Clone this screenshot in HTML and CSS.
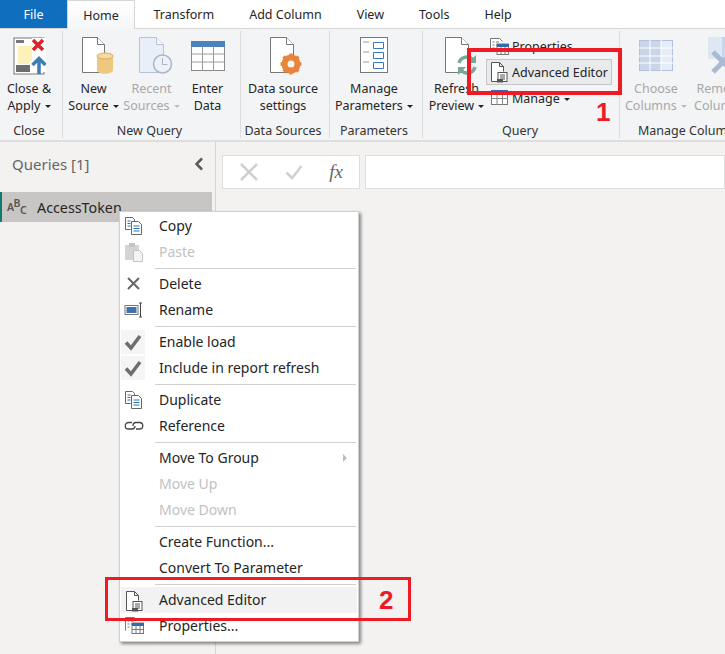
FILE: index.html
```html
<!DOCTYPE html>
<html lang="en">
<head>
    <meta charset="UTF-8">
    <meta name="viewport" content="width=device-width, initial-scale=1.0">
    <title>Power Query Editor</title>
    <link rel="stylesheet" href="styles.css">
</head>
<body>
    <svg class="defs" width="0" height="0">
        <symbol id="i-copy" viewBox="0 0 20 20">
            <path d="M1.500 1.500h7l2 2v2M1.500 1.500v12h5" fill="#fff" stroke="#666"/>
            <path d="M3.500 5h3M3.500 7.500h3M3.500 10h3" stroke="#2f6fb0"/>
            <path d="M7.500 5.500h7l3 3v10h-10z" fill="#fff" stroke="#666"/>
            <path d="M9.500 10h6M9.500 12.500h6M9.500 15h6" stroke="#2f6fb0"/>
        </symbol>
        <symbol id="i-editor" viewBox="0 0 20 22">
            <path d="M8 20.500H2.500v-19h8l4 4v5M10.500 1.500v4h4" fill="#fff" stroke="#555"/>
            <rect x="9" y="11.500" width="9" height="9" fill="#fff" stroke="#555"/>
            <path d="M11 14h5M11 16h5M11 18h5" stroke="#555"/>
            <rect x="8" y="18" width="6" height="3.500" fill="#555"/>
        </symbol>
        <symbol id="i-props" viewBox="0 0 20 18">
            <path d="M1.500 14.500v-13h9l3 3" fill="#fff" stroke="#777"/>
            <path d="M3.500 5h2M3.500 8h2M3.500 11h2M7 5h3M7 8h3" stroke="#777"/>
            <rect x="8" y="7" width="11.500" height="10.500" fill="#fff" stroke="#777"/>
            <rect x="8" y="7" width="12" height="3" fill="#2f6db0"/>
            <path d="M8 13.500h12M12 10v8M16 10v8" stroke="#777"/>
        </symbol>
        <symbol id="i-check" viewBox="0 0 24 24">
            <path d="M5 12.500l5 5.500 9-12" fill="none" stroke="#6e6e6e" stroke-width="3.500"/>
        </symbol>
    </svg>

    <nav class="tabs">
        <a class="tab tab-file">File</a>
        <a class="tab tab-active">Home</a>
        <a class="tab">Transform</a>
        <a class="tab">Add Column</a>
        <a class="tab">View</a>
        <a class="tab">Tools</a>
        <a class="tab">Help</a>
    </nav>

    <section class="ribbon">
        <div class="group group-close">
            <div class="tools">
                <div class="tool">
                    <svg class="big" width="34" height="40" viewBox="0 0 34 40">
                        <rect x="2" y="2" width="30" height="36" fill="#fff" stroke="#777"/>
                        <path d="M6 10h14l0 4 10 0-14 14H6z" fill="#fdf0b8"/>
                        <rect x="4" y="4" width="8" height="3" fill="#777"/>
                        <rect x="4" y="29" width="14" height="7" fill="#6e6e6e"/>
                        <path d="M20 2h14v34H20" fill="#fff"/>
                        <path d="M21 4l10 10M31 4L21 14" stroke="#d9252a" stroke-width="3.500"/>
                        <path d="M27 38V23M20.500 29l6.500-6.500 6.500 6.500" fill="none" stroke="#3e7cb8" stroke-width="3.500"/>
                    </svg>
                    <span class="label">Close &amp;<br>Apply <i class="caret"></i></span>
                </div>
            </div>
            <div class="group-name">Close</div>
        </div>

        <div class="group group-new">
            <div class="tools">
                <div class="tool tool-new">
                    <svg class="big" width="34" height="40" viewBox="0 0 34 40">
                        <path d="M2.500 1.500h15l7 7v28h-22z" fill="#fff" stroke="#777"/>
                        <path d="M17.500 1.500v7h7" fill="#fff" stroke="#777"/>
                        <path d="M17 20v14c0 5 16 5 16 0V20z" fill="#eec87e"/>
                        <ellipse cx="25" cy="20" rx="8" ry="3" fill="#f3d9a4" stroke="#dfae58"/>
                    </svg>
                    <span class="label">New<br>Source <i class="caret"></i></span>
                </div>
                <div class="tool tool-recent off">
                    <svg class="big" width="36" height="40" viewBox="0 0 36 40">
                        <path d="M2.500 1.500h17l7 7v28h-24z" fill="#e9eff9" stroke="#b4c3dc"/>
                        <path d="M19.500 1.500v7h7" fill="#f6f8fc" stroke="#b4c3dc"/>
                        <circle cx="25.500" cy="28" r="9" fill="#eef2f8" stroke="#a9b6c9" stroke-width="1.500"/>
                        <path d="M25.500 22v6.500h5" fill="none" stroke="#a9b6c9"/>
                    </svg>
                    <span class="label">Recent<br>Sources <i class="caret"></i></span>
                </div>
                <div class="tool tool-enter">
                    <svg class="big" width="36" height="40" viewBox="0 -4 36 40">
                        <rect x="1.500" y="1.500" width="33" height="29" fill="#fff" stroke="#8a8a8a"/>
                        <rect x="1" y="1" width="34" height="6" fill="#4f81bd"/>
                        <path d="M1 14h34M1 22h34M12.500 7v24M23.500 7v24" stroke="#9a9a9a"/>
                    </svg>
                    <span class="label">Enter<br>Data</span>
                </div>
            </div>
            <div class="group-name">New Query</div>
        </div>

        <div class="group group-data">
            <div class="tools">
                <div class="tool tool-data">
                    <svg class="big" width="34" height="40" viewBox="0 0 34 40">
                        <path d="M2.500 1.500h16l7 7v28h-23z" fill="#fff" stroke="#777"/>
                        <path d="M18.500 1.500v7h7" fill="#fff" stroke="#777"/>
                        <circle cx="23" cy="28" r="7" fill="none" stroke="#e8853a" stroke-width="5"/>
                        <path d="M23 17.500v21M12.500 28h21M15.500 20.500l15 15M30.500 20.500l-15 15" stroke="#e8853a" stroke-width="3.500"/>
                        <circle cx="23" cy="28" r="3.500" fill="#f3f4f6"/>
                    </svg>
                    <span class="label">Data source<br>settings</span>
                </div>
            </div>
            <div class="group-name">Data Sources</div>
        </div>

        <div class="group group-params">
            <div class="tools">
                <div class="tool">
                    <svg class="big" width="30" height="40" viewBox="0 0 30 40">
                        <rect x="1.500" y="1.500" width="27" height="35" fill="#fff" stroke="#777"/>
                        <path d="M4 6h6M4 16h6M4 26h6" stroke="#999"/>
                        <path d="M14.500 6.500h10v6h-10zM14.500 16.500h10v6h-10zM14.500 26.500h10v6h-10z" fill="#fff" stroke="#3c78b5"/>
                    </svg>
                    <span class="label">Manage<br>Parameters <i class="caret"></i></span>
                </div>
            </div>
            <div class="group-name">Parameters</div>
        </div>

        <div class="group group-query">
            <div class="tools">
                <div class="tool tool-refresh">
                    <svg class="big" width="34" height="40" viewBox="0 0 34 40">
                        <path d="M2.500 1.500h16l7 7v28h-23z" fill="#fff" stroke="#777"/>
                        <path d="M18.500 1.500v7h7" fill="#fff" stroke="#777"/>
                        <path d="M16 27a8 8 0 0 1 14-3M32 31a8 8 0 0 1-14 3" fill="none" stroke="#75a99a" stroke-width="3.500"/>
                        <path d="M33 19v8h-8zM15 39v-8h8z" fill="#75a99a"/>
                    </svg>
                    <span class="label">Refresh<br>Preview <i class="caret"></i></span>
                </div>
                <div class="small-tools">
                    <div class="small small-props">
                        <svg width="20" height="18"><use href="#i-props"/></svg>
                        <span>Properties</span>
                    </div>
                    <div class="small small-hover">
                        <svg width="20" height="22"><use href="#i-editor"/></svg>
                        <span>Advanced Editor</span>
                    </div>
                    <div class="small small-manage">
                        <svg width="18" height="16" viewBox="0 0 18 16">
                            <rect x=".5" y=".5" width="16" height="14" fill="#fff" stroke="#777"/>
                            <rect x="0" y="0" width="17" height="3" fill="#2f6db0"/>
                            <path d="M0 8.500h17M6 3v12M11.500 3v12" stroke="#888"/>
                        </svg>
                        <span>Manage <i class="caret"></i></span>
                    </div>
                </div>
            </div>
            <div class="group-name">Query</div>
        </div>

        <div class="group group-cols">
            <div class="tools">
                <div class="tool tool-choose off">
                    <svg class="big" width="34" height="40" viewBox="0 -4 34 40">
                        <rect x=".5" y=".5" width="33" height="30" fill="#e6edf8" stroke="#b3c2dc"/>
                        <rect x="1" y="1" width="21" height="29" fill="#c9d6ea"/>
                        <path d="M0 8h34M0 16h34M0 23h34M11 0v31M22 0v31" stroke="#fff"/>
                    </svg>
                    <span class="label">Choose<br>Columns <i class="caret"></i></span>
                </div>
                <div class="tool tool-remove off">
                    <svg class="big" width="34" height="40" viewBox="0 0 34 40">
                        <path d="M1 1h14v22H1z" fill="#dfe7f3"/>
                        <path d="M15 1h19v22H15z" fill="#c9d6ea"/>
                        <path d="M6 16l20 20M26 16L6 36" stroke="#a9bad3" stroke-width="5"/>
                    </svg>
                    <span class="label">Remove<br>Columns</span>
                </div>
            </div>
            <div class="group-name">Manage Columns</div>
        </div>
    </section>

    <main class="workspace">
        <aside class="queries">
            <div class="queries-head">
                <span>Queries [1]</span>
                <svg width="12" height="14" viewBox="0 0 12 14"><path d="M9 1.500L3.500 7 9 12.500" fill="none" stroke="#5a5a5a" stroke-width="2.500"/></svg>
            </div>
            <div class="query-row">
                <span class="abc">A<sup>B</sup><sub>C</sub></span>
                <span>AccessToken</span>
            </div>
        </aside>
        <div class="editor">
            <div class="formula">
                <div class="formula-btns">
                    <svg width="20" height="20" viewBox="0 0 20 20"><path d="M2 2l16 16M18 2L2 18" stroke="#d0d0d0" stroke-width="2.500"/></svg>
                    <svg width="18" height="18" viewBox="0 0 18 18"><path d="M1.500 9.500L7 15 16.500 3" fill="none" stroke="#d0d0d0" stroke-width="2.500"/></svg>
                    <span class="fx"><em>f</em><em>x</em></span>
                </div>
                <div class="formula-input"></div>
            </div>
        </div>
    </main>

    <ul class="menu">
        <li class="item"><svg class="ico" width="20" height="20"><use href="#i-copy"/></svg>Copy</li>
        <li class="item off">
            <svg class="ico" width="20" height="20" viewBox="0 0 20 20">
                <path d="M1 3h14v15H1z" fill="#d4d4d4"/><path d="M5 1h6v4H5z" fill="#c4c4c4"/>
                <path d="M9.500 8.500h6l3 3v8h-9z" fill="#f4f4f4" stroke="#c4c4c4"/>
            </svg>Paste
        </li>
        <li class="sep"></li>
        <li class="item">
            <svg class="ico" width="20" height="20" viewBox="0 0 20 20"><path d="M4 4l11 11M15 4L4 15" stroke="#666" stroke-width="2"/></svg>Delete
        </li>
        <li class="item">
            <svg class="ico" width="20" height="20" viewBox="0 0 20 20">
                <rect x="1" y="5.500" width="13" height="9" fill="#fff" stroke="#777"/>
                <rect x="2.500" y="7" width="10" height="6" fill="#3d74b0"/>
                <path d="M15 3h3M15 17h3M16.500 3v14" stroke="#444" fill="none"/>
            </svg>Rename
        </li>
        <li class="sep"></li>
        <li class="item"><span class="tick"><svg width="24" height="24"><use href="#i-check"/></svg></span>Enable load</li>
        <li class="item"><span class="tick"><svg width="24" height="24"><use href="#i-check"/></svg></span>Include in report refresh</li>
        <li class="sep"></li>
        <li class="item"><svg class="ico" width="20" height="20"><use href="#i-copy"/></svg>Duplicate</li>
        <li class="item">
            <svg class="ico" width="20" height="20" viewBox="0 0 20 20">
                <path d="M8 6.500H4.500a3.200 3.200 0 0 0 0 6.500H8c2 0 3-1.500 3-3" fill="none" stroke="#444" stroke-width="1.300"/>
                <path d="M9 10c0-2 1-3.500 3-3.500h3.500a3.200 3.200 0 0 1 0 6.500H12" fill="none" stroke="#444" stroke-width="1.300"/>
            </svg>Reference
        </li>
        <li class="sep"></li>
        <li class="item">Move To Group<i class="arrow"></i></li>
        <li class="item off">Move Up</li>
        <li class="item off">Move Down</li>
        <li class="sep"></li>
        <li class="item">Create Function...</li>
        <li class="item">Convert To Parameter</li>
        <li class="sep"></li>
        <li class="item item-hover"><svg class="ico" width="20" height="22"><use href="#i-editor"/></svg>Advanced Editor</li>
        <li class="item"><svg class="ico" width="20" height="18"><use href="#i-props"/></svg>Properties...</li>
    </ul>

    <div class="callout callout-one"></div>
    <b class="step step-one">1</b>
    <div class="callout callout-two"></div>
    <b class="step step-two">2</b>
</body>
</html>
```

FILE: styles.css
```css
html, body { margin: 0; height: 100%; overflow: hidden; }
body { font-family: "Noto Sans", "Open Sans", Arial, sans-serif; font-size: 12.500px; color: #252525; background: #f3f2f1; position: relative; }
.defs { position: absolute; }

.tabs { display: flex; height: 28px; background: #fff; border-bottom: 1px solid #d6d6d6; }
.tab { padding: 0 17.500px; line-height: 29px; }
.tab-file { width: 67px; box-sizing: border-box; padding: 0; text-align: center; background: #106ebe; color: #fff; }
.tab-active { width: 68px; height: 29px; box-sizing: border-box; padding: 0; text-align: center; background: linear-gradient(#fff, #f5f6f8); border: 1px solid #d6d6d6; border-bottom: 0; margin-right: 1px; }

.ribbon { display: flex; height: 111px; background: #f3f4f6; border-bottom: 2px solid #dedede; overflow: hidden; }
.group { display: flex; flex-direction: column; flex: none; box-sizing: border-box; height: 107px; margin-top: 2px; padding-right: 4px; border-right: 1px solid #dcdcdc; }
.group-close { width: 63px; }
.group-new { width: 178px; }
.group-data { width: 89px; }
.group-params { width: 93px; }
.group-query { width: 197px; padding-right: 2px; }
.group-cols { width: 140px; padding-right: 0; border-right: 0; }
.group-name { height: 16px; line-height: 18px; text-align: center; white-space: nowrap; color: #333; }
.group-cols .group-name { text-align: left; padding-left: 18px; }
.tools { flex: 1; display: flex; justify-content: center; min-height: 0; }
.tool { display: flex; flex-direction: column; align-items: center; flex: none; padding-top: 5px; }
.big { display: block; height: 40px; margin-bottom: 4px; flex: none; }
.label { display: block; text-align: center; line-height: 17px; white-space: nowrap; }
.off { color: #a8a8a8; }
.tool-new { width: 56px; }
.tool-recent { width: 60px; }
.tool-enter { width: 52px; }
.tool-new .big, .tool-recent .big { margin-left: 6px; }
.tool-data .big { margin-left: 4px; }
.tool-refresh { width: 59px; }
.tool-refresh .big { margin-left: 6px; }
.group-query .tools { justify-content: flex-start; padding-left: 4px; }
.tool-choose { width: 64px; margin-left: 4px; }
.tool-remove { width: 64px; }
.tool-remove .big { margin-left: 8px; }
.group-cols .tools { justify-content: flex-start; }
.caret { display: inline-block; width: 0; height: 0; margin-left: 1px; vertical-align: 2px; border: 3.500px solid transparent; border-top-color: #222; border-bottom: 0; }
.off .caret { border-top-color: #bdbdbd; }

.small-tools { display: flex; flex-direction: column; flex: none; width: 126px; padding-top: 2px; }
.small { display: flex; align-items: center; gap: 3px; height: 26px; box-sizing: border-box; white-space: nowrap; }
.small-props { padding-left: 3px; }
.small-manage { padding-left: 5px; }
.small-hover { border: 1px solid #c6c6c6; background: #e9eaec; padding-left: 2px; }

.workspace { display: flex; height: 512px; }
.queries { width: 216px; flex: none; box-sizing: border-box; border-right: 1px solid #d4d4d4; }
.queries-head { display: flex; justify-content: space-between; align-items: center; height: 50px; box-sizing: border-box; padding: 0 10px 6px 12px; font-size: 15px; color: #666; }
.query-row { display: flex; align-items: center; gap: 11px; width: 212px; height: 30px; box-sizing: border-box; padding: 1px 0 0 5px; background: #c8c6c4; border-left: 2px solid #0f7b6c; font-size: 14.300px; }
.abc { width: 19px; font-size: 10.500px; font-weight: 600; color: #555; letter-spacing: -.5px; line-height: 1; }
.abc sup, .abc sub { font-size: 10.500px; line-height: 0; }
.editor { flex: 1; min-width: 0; padding: 13px 0 0 6px; }
.formula { display: flex; gap: 5px; height: 34px; }
.formula-btns { display: flex; align-items: center; justify-content: space-between; flex: none; width: 138px; box-sizing: border-box; padding: 0 16px; background: #fff; border: 1px solid #dedede; }
.formula-input { flex: 1; background: #fff; border: 1px solid #dedede; }
.fx { font-family: "Liberation Serif", serif; font-size: 19px; color: #666; }

.menu { position: absolute; left: 119px; top: 211px; width: 240px; height: 431px; box-sizing: border-box; margin: 0; padding: 1px 1px 0; list-style: none; background: #fff; border: 1px solid #d0d0d0; box-shadow: 2px 2px 3px rgba(0, 0, 0, .45); }
.item { position: relative; height: 26px; line-height: 26px; padding-left: 38px; font-size: 14px; white-space: nowrap; }
.item.off { color: #c2c2c2; }
.item-hover { background: #f2f2f2; }
.sep { height: 1px; margin: 2.500px 1px 2.500px 34px; background: #d0d0d0; }
.ico { position: absolute; left: 3px; top: 3px; }
.tick { position: absolute; left: 0; top: 1px; width: 24px; height: 24px; background: #f5f5f5; }
.tick svg { display: block; }
.arrow { position: absolute; right: 10px; top: 9px; width: 0; height: 0; border: 4px solid transparent; border-left-color: #bdbdbd; border-right: 0; }

.callout { position: absolute; box-sizing: border-box; border: 3px solid #ed1c24; }
.callout-one { left: 467px; top: 48px; width: 155px; height: 47px; border-width: 4px; }
.callout-two { left: 105px; top: 577px; width: 306px; height: 44px; }
.step { position: absolute; color: #ed1c24; font-family: "Liberation Sans", Arial, sans-serif; font-size: 26px; line-height: 30px; }
.step-one { left: 596px; top: 97px; }
.step-two { left: 379px; top: 585px; }
```
